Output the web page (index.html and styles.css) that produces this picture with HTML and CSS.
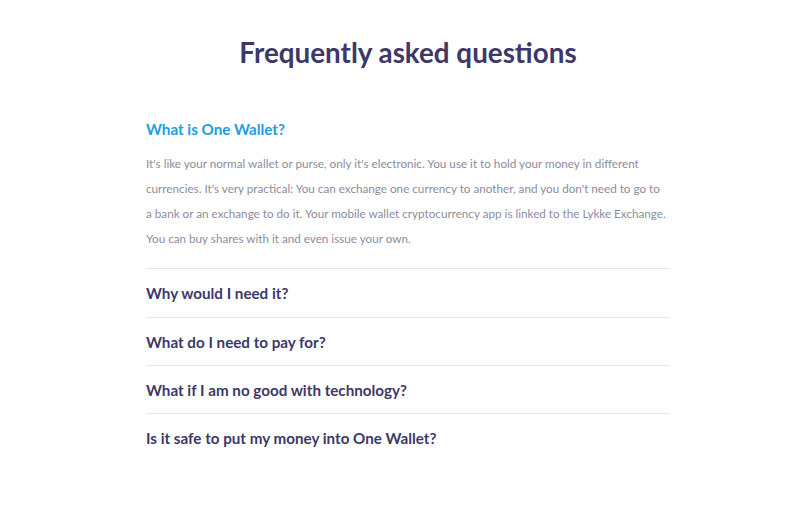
FILE: index.html
```html
<!DOCTYPE html>
<html lang="en">
<head>
<meta charset="utf-8">
<title>FAQ</title>
<link rel="stylesheet" href="styles.css">
</head>
<body>
<main class="faq">
  <h1 class="faq-title">Frequently asked questions</h1>
  <ul class="faq-list">
    <li class="faq-item is-open">
      <h2 class="faq-q">What is One Wallet?</h2>
      <p class="faq-a">It's like your normal wallet or purse, only it's electronic. You use it to hold your money in different<br>
      currencies. It's very practical: You can exchange one currency to another, and you don't need to go to<br>
      a bank or an exchange to do it. Your mobile wallet cryptocurrency app is linked to the Lykke Exchange.<br>
      You can buy shares with it and even issue your own.</p>
    </li>
    <li class="faq-item"><h2 class="faq-q">Why would I need it?</h2></li>
    <li class="faq-item"><h2 class="faq-q">What do I need to pay for?</h2></li>
    <li class="faq-item"><h2 class="faq-q">What if I am no good with technology?</h2></li>
    <li class="faq-item"><h2 class="faq-q">Is it safe to put my money into One Wallet?</h2></li>
  </ul>
</main>
</body>
</html>
```
FILE: styles.css
```css
* { box-sizing: border-box; }
html, body { margin: 0; padding: 0; background: #ffffff; }
body { font-family: Lato, "Open Sans", sans-serif; }

.faq {
  width: 540px;
  margin: 0 auto;
  padding: 33px 0 40px 16px;
}

.faq-title {
  margin: 0 0 44px;
  text-align: center;
  font-size: 27.8px;
  font-weight: 700;
  line-height: 40px;
  color: #3d3868;
}

.faq-list {
  list-style: none;
  margin: 0;
  padding: 0;
}

.faq-item {
  border-top: 1px solid #e6e6ea;
  padding: 12px 0 11px;
}
.faq-item:first-child { border-top: none; padding-top: 0; }
.faq-item:nth-child(2) { padding-bottom: 12px; }

.faq-q {
  margin: 0;
  font-size: 15.2px;
  font-weight: 700;
  line-height: 24px;
  color: #3d3868;
}
.is-open .faq-q { color: #1d9ee0; }

.faq-a {
  margin: 10px 0 6px;
  font-size: 11.7px;
  line-height: 25px;
  white-space: nowrap;
  color: #8d8c9f;
}
```
